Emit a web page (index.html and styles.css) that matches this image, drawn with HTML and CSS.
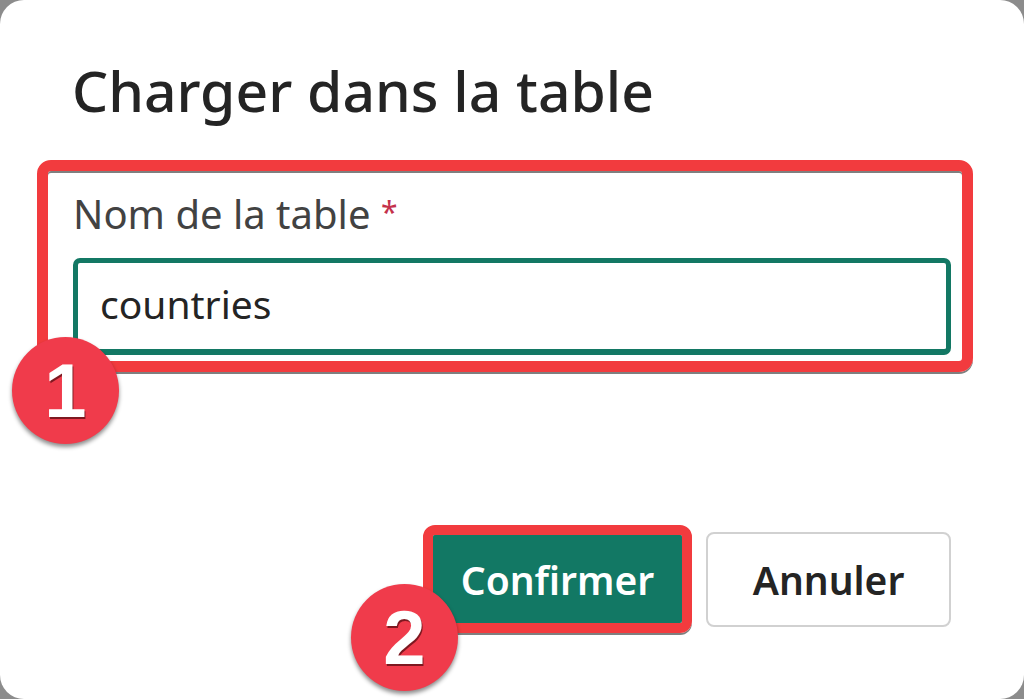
FILE: index.html
```html
<!DOCTYPE html>
<html lang="fr">
<head>
<meta charset="utf-8">
<title>Charger dans la table</title>
<link rel="stylesheet" href="styles.css">
</head>
<body>
<div class="dialog">
  <h1 class="title">Charger dans la table</h1>
  <div class="highlight field-box">
    <label class="label" for="tname">Nom de la table <span class="req">*</span></label>
    <div class="input">countries</div>
  </div>
  <div class="actions">
    <div class="highlight btn-box">
      <button class="btn primary">Confirmer</button>
    </div>
    <button class="btn secondary">Annuler</button>
  </div>
  <div class="badge badge-1"><span>1</span></div>
  <div class="badge badge-2"><span>2</span></div>
</div>
</body>
</html>
```
FILE: styles.css
```css
* { box-sizing: border-box; }
html, body { margin: 0; padding: 0; }
body {
  background: #8c8c8c;
  font-family: "Noto Sans", "Segoe UI", sans-serif;
  width: 1024px;
  height: 699px;
  overflow: hidden;
}
.dialog {
  position: relative;
  width: 1024px;
  height: 699px;
  background: #ffffff;
  border-radius: 24px;
  padding: 50px 51px 0 37px;
  display: flex;
  flex-direction: column;
}
.title {
  margin: 0 0 0 35px;
  font-size: 57px;
  line-height: 80px;
  font-weight: 500;
  color: #242424;
}
.highlight {
  border: 11px solid #f23b3e;
  border-radius: 14px;
  box-shadow: 0 2px 0 #7f7f7f, inset 0 2px 0 #7f7f7f;
}
.field-box {
  margin-top: 30px;
  width: 936px;
  height: 212px;
  padding: 16px 11px 0 25px;
  display: flex;
  flex-direction: column;
}
.label {
  font-size: 40px;
  line-height: 50px;
  color: #424242;
}
.req {
  color: #c4314b;
  font-size: 30px;
  vertical-align: 6px;
}
.input {
  margin-top: 19px;
  height: 97px;
  border: 5px solid #137864;
  border-bottom-width: 6px;
  border-radius: 7px;
  padding: 0 0 4px 22px;
  font-size: 39px;
  line-height: 82px;
  color: #242424;
}
.actions {
  margin-top: 153px;
  margin-right: 22px;
  display: flex;
  justify-content: flex-end;
  align-items: center;
  gap: 14px;
}
.btn-box {
  width: 269px;
  height: 108px;
  border-width: 10px;
  border-radius: 12px;
  overflow: hidden;
}
.btn {
  font-family: inherit;
  font-size: 39px;
  font-weight: 600;
  border-radius: 8px;
  cursor: pointer;
}
.primary {
  width: 100%;
  height: 100%;
  border: 0;
  border-radius: 0;
  background: #127864;
  color: #ffffff;
  padding: 0;
}
.secondary {
  width: 245px;
  height: 95px;
  background: #ffffff;
  color: #242424;
  border: 2px solid #d1d1d1;
  padding: 0;
}
.badge {
  position: absolute;
  width: 107px;
  height: 107px;
  border-radius: 50%;
  background: #f03b4b;
  box-shadow: 0 3px 4px rgba(0, 0, 0, 0.45);
  display: flex;
  align-items: center;
  justify-content: center;
  color: #ffffff;
  font-family: "Liberation Sans", Arial, sans-serif;
  font-weight: 700;
  font-size: 76px;
  line-height: 1;
  text-shadow: 1px 2px 0 #7d1820;
}
.badge-1 { left: 12px; top: 337px; }
.badge-2 { left: 351px; top: 584px; }
```
